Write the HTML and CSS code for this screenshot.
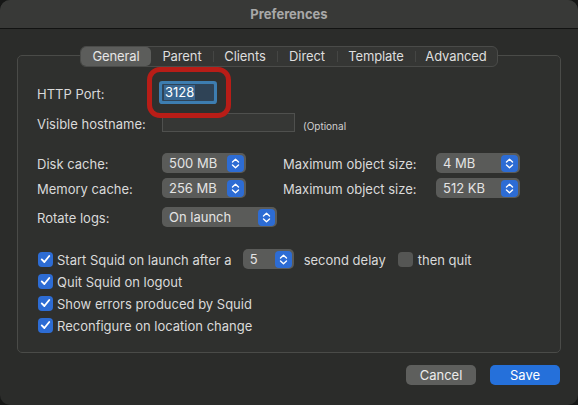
FILE: index.html
```html
<!DOCTYPE html>
<html>
<head>
<meta charset="utf-8">
<link rel="stylesheet" href="styles.css">
</head>
<body>
<div class="window">
  <div class="titlebar">Preferences</div>
  <div class="content">
    <div class="tabs">
      <div class="tab t-general selected">General</div>
      <div class="tab t-parent">Parent</div>
      <div class="tab t-clients">Clients</div>
      <div class="tab t-direct">Direct</div>
      <div class="tab t-template">Template</div>
      <div class="tab t-advanced">Advanced</div>
    </div>
    <div class="group">
      <div class="row row-port">
        <span class="label">HTTP Port:</span>
        <div class="portfield"><span class="sel-text">3128</span></div>
        <div class="annotation"></div>
      </div>
      <div class="row row-host">
        <span class="label">Visible hostname:</span>
        <div class="textfield"></div>
        <span class="hint">(Optional</span>
      </div>
      <div class="row row-disk">
        <span class="label">Disk cache:</span>
        <div class="popup pw-small"><span>500 MB</span><span class="arrows"><svg viewBox="0 0 17 17" width="17" height="17"><path d="M5.5 7 L8.5 4.2 L11.5 7 M5.5 10 L8.5 12.8 L11.5 10"/></svg></span></div>
        <span class="label label-right">Maximum object size:</span>
        <div class="popup pw-small"><span>4 MB</span><span class="arrows"><svg viewBox="0 0 17 17" width="17" height="17"><path d="M5.5 7 L8.5 4.2 L11.5 7 M5.5 10 L8.5 12.8 L11.5 10"/></svg></span></div>
      </div>
      <div class="row row-mem">
        <span class="label">Memory cache:</span>
        <div class="popup pw-small"><span>256 MB</span><span class="arrows"><svg viewBox="0 0 17 17" width="17" height="17"><path d="M5.5 7 L8.5 4.2 L11.5 7 M5.5 10 L8.5 12.8 L11.5 10"/></svg></span></div>
        <span class="label label-right">Maximum object size:</span>
        <div class="popup pw-small"><span>512 KB</span><span class="arrows"><svg viewBox="0 0 17 17" width="17" height="17"><path d="M5.5 7 L8.5 4.2 L11.5 7 M5.5 10 L8.5 12.8 L11.5 10"/></svg></span></div>
      </div>
      <div class="row row-rotate">
        <span class="label">Rotate logs:</span>
        <div class="popup pw-wide"><span>On launch</span><span class="arrows"><svg viewBox="0 0 17 17" width="17" height="17"><path d="M5.5 7 L8.5 4.2 L11.5 7 M5.5 10 L8.5 12.8 L11.5 10"/></svg></span></div>
      </div>
      <div class="checks">
        <div class="check-row">
          <span class="checkbox on"><svg viewBox="0 0 16 16" width="16" height="16"><path d="M4 8.4 L6.8 11.2 L12 4.8"/></svg></span>
          <span class="check-label">Start Squid on launch after a</span>
          <div class="popup pw-step"><span>5</span><span class="arrows"><svg viewBox="0 0 17 17" width="17" height="17"><path d="M5.5 7 L8.5 4.2 L11.5 7 M5.5 10 L8.5 12.8 L11.5 10"/></svg></span></div>
          <span class="check-label">second delay</span>
          <span class="checkbox off"></span>
          <span class="check-label">then quit</span>
        </div>
        <div class="check-row">
          <span class="checkbox on"><svg viewBox="0 0 16 16" width="16" height="16"><path d="M4 8.4 L6.8 11.2 L12 4.8"/></svg></span>
          <span class="check-label">Quit Squid on logout</span>
        </div>
        <div class="check-row">
          <span class="checkbox on"><svg viewBox="0 0 16 16" width="16" height="16"><path d="M4 8.4 L6.8 11.2 L12 4.8"/></svg></span>
          <span class="check-label">Show errors produced by Squid</span>
        </div>
        <div class="check-row">
          <span class="checkbox on"><svg viewBox="0 0 16 16" width="16" height="16"><path d="M4 8.4 L6.8 11.2 L12 4.8"/></svg></span>
          <span class="check-label">Reconfigure on location change</span>
        </div>
      </div>
    </div>
    <div class="buttons">
      <div class="button cancel">Cancel</div>
      <div class="button save">Save</div>
    </div>
  </div>
</div>
</body>
</html>
```

FILE: styles.css
```css
* { box-sizing: border-box; }

html, body {
  margin: 0;
  padding: 0;
  background: #161716;
}

body {
  font-family: "Inter", "Liberation Sans", sans-serif;
  font-size: 13px;
  color: #dadada;
}

.window {
  width: 578px;
  height: 405px;
  background: #2b2c2a;
  border-radius: 10px;
  overflow: hidden;
}

.titlebar {
  height: 29px;
  background: #383937;
  border-bottom: 1px solid #121312;
  display: flex;
  align-items: center;
  justify-content: center;
  font-weight: 700;
  color: #a8a8a8;
  padding-bottom: 1px;
}

.content {
  padding: 0 17px;
}

.tabs {
  position: relative;
  z-index: 1;
  margin: 17px auto 0;
  width: 418px;
  height: 21px;
  display: flex;
  background: #353634;
  border: 1px solid #4a4b49;
  border-radius: 6px;
}

.tab {
  display: flex;
  align-items: center;
  justify-content: center;
  color: #dedede;
  position: relative;
  letter-spacing: -0.1px;
  padding-bottom: 1px;
}

.tab + .tab::before {
  content: "";
  position: absolute;
  left: 0;
  top: 4px;
  bottom: 4px;
  width: 1px;
  background: #454644;
}

.tab.selected + .tab::before { display: none; }

.tab.selected {
  background: #5c5d5b;
  border-radius: 5px;
  color: #e6e6e6;
}

.t-general { width: 70px; }
.t-parent { width: 62px; }
.t-clients { width: 64px; }
.t-direct { width: 60px; }
.t-template { width: 78px; }
.t-advanced { width: 82px; }

.group {
  margin-top: -12px;
  height: 298px;
  background: #2f302e;
  border: 1px solid #4a4b48;
  border-radius: 5px;
  padding: 25px 0 0 19px;
}

.row {
  display: flex;
  align-items: center;
}

.label {
  width: 125px;
  flex: none;
  color: #dadada;
  padding-top: 2px;
}

.label-right {
  width: 153px;
  margin-left: 37px;
}

.row-port {
  height: 23px;
  position: relative;
}

.portfield {
  width: 52px;
  height: 17px;
  background: #2f4356;
  box-shadow: 0 0 0 3px #3d7db0;
  border-radius: 1px;
  display: flex;
  align-items: center;
  padding-left: 2px;
}

.sel-text {
  background: #3a6791;
  color: #ffffff;
  line-height: 15px;
  padding: 0 1px;
}

.annotation {
  position: absolute;
  left: 110px;
  top: -14px;
  width: 84px;
  height: 51px;
  border: 5px solid #b81d17;
  border-radius: 13px;
}

.row-host {
  height: 19px;
  margin-top: 9px;
}

.textfield {
  width: 133px;
  height: 19px;
  background: #363735;
  border: 1px solid #4f504e;
}

.hint {
  font-size: 10px;
  margin-left: 8px;
  padding-top: 6px;
  color: #cfcfcf;
}

.row-disk {
  height: 20px;
  margin-top: 21px;
}

.row-mem {
  height: 20px;
  margin-top: 5px;
}

.row-rotate {
  height: 20px;
  margin-top: 9px;
}

.popup {
  height: 20px;
  background: #5a5b59;
  border-radius: 5px;
  display: flex;
  align-items: center;
  justify-content: space-between;
  padding: 0 2px 0 7px;
  color: #e4e4e4;
  flex: none;
}

.pw-small { width: 84px; }
.pw-wide { width: 115px; }
.pw-step { width: 51px; margin: 0 10px 0 11px; }

.arrows {
  width: 17px;
  height: 17px;
  background: #2d6cd4;
  border-radius: 4px;
  display: flex;
}

.arrows svg path {
  fill: none;
  stroke: #ffffff;
  stroke-width: 1.4;
  stroke-linecap: round;
  stroke-linejoin: round;
}

.checks {
  margin-top: 21px;
  margin-left: 1px;
}

.check-row {
  height: 22px;
  display: flex;
  align-items: center;
}

.checkbox {
  width: 15px;
  height: 15px;
  border-radius: 4px;
  flex: none;
  display: flex;
  align-items: center;
  justify-content: center;
  margin-right: 4px;
}

.checkbox.on { background: #2d6cd4; }

.checkbox.off {
  background: #555654;
  margin-left: 12px;
  margin-right: 5px;
}

.checkbox svg path {
  fill: none;
  stroke: #ffffff;
  stroke-width: 2;
  stroke-linecap: round;
  stroke-linejoin: round;
}

.check-label {
  color: #dadada;
  white-space: nowrap;
  padding-top: 1px;
}

.buttons {
  display: flex;
  justify-content: flex-end;
  gap: 14px;
  margin-top: 12px;
  padding-right: 1px;
}

.button {
  width: 70px;
  height: 20px;
  border-radius: 5px;
  display: flex;
  align-items: center;
  justify-content: center;
  color: #ececec;
}

.cancel { background: #5e5f5d; }
.save { background: #2570da; color: #ffffff; }
```
